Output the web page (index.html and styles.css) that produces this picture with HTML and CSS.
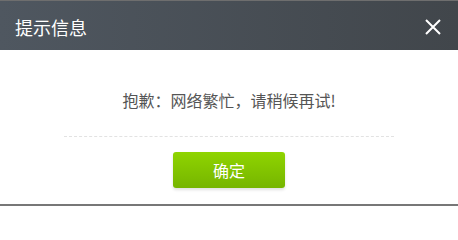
FILE: index.html
```html
<!DOCTYPE html>
<html lang="zh-CN">
<head>
<meta charset="utf-8">
<title>提示信息</title>
<link rel="stylesheet" href="styles.css">
</head>
<body>
<div class="dialog">
  <div class="header">
    <span class="title">提示信息</span>
    <span class="close" aria-label="关闭">
      <svg width="16" height="16" viewBox="0 0 16 16"><path d="M1 1 L15 15 M15 1 L1 15" stroke="#fff" stroke-width="2" fill="none"/></svg>
    </span>
  </div>
  <div class="body">
    <p class="message">抱歉：网络繁忙，请稍候再试!</p>
    <div class="divider"></div>
    <div class="actions"><button class="btn-ok">确定</button></div>
  </div>
</div>
</body>
</html>
```
FILE: styles.css
```css
html, body {
  margin: 0;
  padding: 0;
  background: #fff;
}
.dialog {
  width: 458px;
  height: 206px;
  display: flex;
  flex-direction: column;
  box-sizing: border-box;
  border-bottom: 2px solid #777;
  font-family: "Noto Sans CJK SC", "Noto Sans", sans-serif;
}
.header {
  height: 50px;
  box-sizing: border-box;
  border-top: 1px solid #6e6e6e;
  background: linear-gradient(to right, #4f5760, #41464b);
  display: flex;
  align-items: center;
  justify-content: space-between;
  padding: 2px 17px 0 15px;
}
.title {
  color: #fff;
  font-size: 18px;
  line-height: 20px;
}
.close {
  width: 16px;
  height: 16px;
  display: flex;
}
.body {
  flex: 1;
  display: flex;
  flex-direction: column;
  padding-top: 40px;
}
.message {
  margin: 0;
  text-align: center;
  color: #555;
  font-size: 16px;
  line-height: 20px;
}
.divider {
  margin: 26px 64px 0;
  border-top: 1px dashed #e2e2e2;
}
.actions {
  display: flex;
  justify-content: center;
  margin-top: 15px;
}
.btn-ok {
  width: 112px;
  height: 36px;
  border: none;
  border-radius: 3px;
  background: linear-gradient(to bottom, #8fd400, #76b500);
  box-shadow: 0 2px 3px rgba(0, 0, 0, 0.12);
  color: #fff;
  font-family: "Noto Sans CJK SC", "Noto Sans", sans-serif;
  font-size: 16px;
  padding: 0;
}
```
